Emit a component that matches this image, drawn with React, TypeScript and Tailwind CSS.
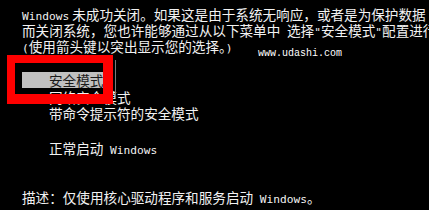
export default function App() {
  const mono = "font-['DejaVu_Sans_Mono',monospace] text-[11.2px]";

  return (
    <div className="relative w-[429px] h-[210px] overflow-hidden bg-black text-[#f2f2f2] font-['Noto_Sans_CJK_SC',sans-serif] text-[13.6px] leading-[16px] whitespace-nowrap">
      <div className="pt-[6px] pl-[22px]">
        <div className="h-[16px]">
          <span className={mono}>Windows</span>{' '}未成功关闭。如果这是由于系统无响应，或者是为保护数据
        </div>
        <div className="h-[16px]">
          而关闭系统，您也许能够通过从以下菜单中<span className={mono}> </span>选择<span className={mono}>"</span>安全模式<span className={mono}>"</span>配置进行
        </div>
        <div className="h-[16px]">
          <span className={mono}>(</span>使用箭头键以突出显示您的选择。<span className={mono}>)</span>
        </div>
      </div>

      {/* menu */}
      <div className="mt-[18px]">
        <div className="ml-[22px] w-[81px] h-[16px] pl-[27px] bg-[#c0c0c0] text-[#1a1a1a]">安全模式</div>
        <div className="mt-[1px] h-[16px] pl-[49px]">网络安全模式</div>
        <div className="h-[16px] pl-[49px]">带命令提示符的安全模式</div>
        <div className="mt-[19px] h-[16px] pl-[49px]">
          正常启动<span className={mono}> Windows</span>
        </div>
      </div>

      <div className="mt-[33px] h-[16px] pl-[22px]">
        描述：仅使用核心驱动程序和服务启动<span className={mono}> Windows</span>。
      </div>

      {/* watermark */}
      <div className="absolute left-[258px] top-[48px] font-['Liberation_Mono',monospace] text-[10px] leading-[12px] text-white">
        www.udashi.com
      </div>

      {/* red highlight box */}
      <div className="absolute left-[7px] top-[55px] w-[106px] h-[49px] border-t-[8px] border-l-[8px] border-r-[10px] border-b-[10px] border-[#ff0000]" />
      <div className="absolute left-[115px] top-[60px] w-px h-[37px] bg-[#7a7a7a]" />
    </div>
  );
}
